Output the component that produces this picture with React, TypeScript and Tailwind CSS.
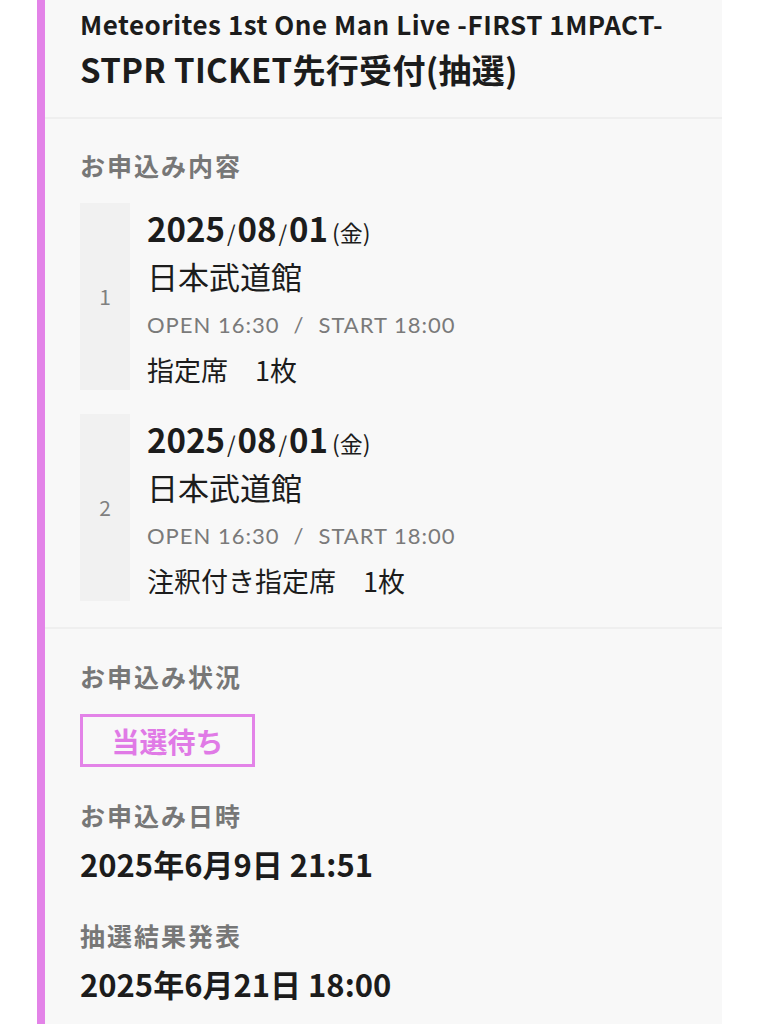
const jp = "font-['Noto_Sans_CJK_JP','Noto_Sans',sans-serif]";

type Entry = { no: number; seat: string };

const entries: Entry[] = [
  { no: 1, seat: "指定席　1枚" },
  { no: 2, seat: "注釈付き指定席　1枚" },
];

const Label = ({ children, className = "" }: { children: React.ReactNode; className?: string }) => (
  <p className={`text-[25px] leading-[36px] font-bold tracking-[2px] text-[#777777] ${className}`}>{children}</p>
);

const EntryRow = ({ item }: { item: Entry }) => (
  <div className="flex h-[187px]">
    <div className="w-[50px] shrink-0 bg-[#f1f1f1] flex items-center justify-center text-[21px] text-[#808080]">
      {item.no}
    </div>
    <div className="pl-[17px] pt-[5px]">
      <p className="leading-[40px] text-[#1c1c1c] whitespace-nowrap">
        <span className="text-[33px] font-bold">2025</span>
        <span className="text-[22px] mx-[2px]">/</span>
        <span className="text-[33px] font-bold">08</span>
        <span className="text-[22px] mx-[2px]">/</span>
        <span className="text-[33px] font-bold">01</span>
        <span className="text-[23px] ml-[4px]">(金)</span>
      </p>
      <p className="mt-[1px] text-[31px] leading-[40px] text-[#1c1c1c]">日本武道館</p>
      <p className="mt-[13px] text-[22px] leading-[32px] tracking-[1px] text-[#7a7a7a] font-['Lato',sans-serif] whitespace-nowrap">
        OPEN 16:30<span className="mx-[14px]">/</span>START 18:00
      </p>
      <p className="mt-[11px] text-[27px] leading-[36px] text-[#1c1c1c] whitespace-pre">{item.seat}</p>
    </div>
  </div>
);

export default function App() {
  return (
    <div className={`min-h-[1024px] bg-white ${jp}`}>
      <div className="ml-[37px] w-[685px] min-h-[1024px] border-l-[8px] border-[#e383e8] bg-[#f8f8f8]">
        {/* heading */}
        <div className="pl-[35px] pt-[6px] pb-[25px] border-b-2 border-[#efefef]">
          <h2 className="text-[26px] leading-[36px] font-bold tracking-[0.5px] text-[#1c1c1c] whitespace-nowrap">
            Meteorites 1st One Man Live -FIRST 1MPACT-
          </h2>
          <h1 className="mt-[4px] text-[33px] leading-[46px] font-bold tracking-[0.3px] text-[#1c1c1c] whitespace-nowrap">
            STPR TICKET先行受付(抽選)
          </h1>
        </div>

        {/* entries */}
        <div className="pl-[35px] pt-[28px] pb-[26px] border-b-2 border-[#efefef]">
          <Label>お申込み内容</Label>
          <div className="mt-[20px] flex flex-col gap-[24px]">
            {entries.map((item) => (
              <EntryRow key={item.no} item={item} />
            ))}
          </div>
        </div>

        {/* status */}
        <div className="pl-[35px] pt-[29px] pb-[40px]">
          <Label>お申込み状況</Label>
          <div className="mt-[20px] w-[175px] h-[53px] border-[3px] border-[#e383e8] flex items-center justify-center text-[28px] font-bold text-[#e07ae6]">
            当選待ち
          </div>

          <Label className="mt-[30px]">お申込み日時</Label>
          <p className="mt-[9px] text-[31px] leading-[44px] font-bold text-[#1c1c1c]">2025年6月9日 21:51</p>

          <Label className="mt-[31px]">抽選結果発表</Label>
          <p className="mt-[9px] text-[31px] leading-[44px] font-bold text-[#1c1c1c]">2025年6月21日 18:00</p>
        </div>
      </div>
    </div>
  );
}
